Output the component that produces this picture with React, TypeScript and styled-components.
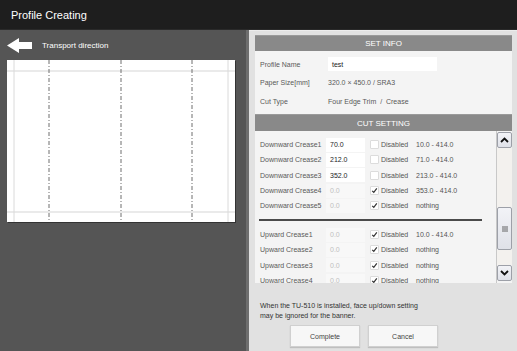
import styled, { createGlobalStyle } from "styled-components";

type CreaseRow = {
  label: string;
  value: string;
  disabled: boolean;
  range: string;
};

const downward: CreaseRow[] = [
  { label: "Downward Crease1", value: "70.0", disabled: false, range: "10.0 - 414.0" },
  { label: "Downward Crease2", value: "212.0", disabled: false, range: "71.0 - 414.0" },
  { label: "Downward Crease3", value: "352.0", disabled: false, range: "213.0 - 414.0" },
  { label: "Downward Crease4", value: "0.0", disabled: true, range: "353.0 - 414.0" },
  { label: "Downward Crease5", value: "0.0", disabled: true, range: "nothing" },
];

const upward: CreaseRow[] = [
  { label: "Upward Crease1", value: "0.0", disabled: true, range: "10.0 - 414.0" },
  { label: "Upward Crease2", value: "0.0", disabled: true, range: "nothing" },
  { label: "Upward Crease3", value: "0.0", disabled: true, range: "nothing" },
  { label: "Upward Crease4", value: "0.0", disabled: true, range: "nothing" },
];

const GlobalStyle = createGlobalStyle`
  body {
    margin: 0;
    background: #1e1e1e;
    font-family: "Liberation Sans", Arial, sans-serif;
  }
`;

function ArrowIcon() {
  return (
    <svg width="26" height="16" viewBox="0 0 26 16">
      <path d="M0 7.5 L12 0 L12 4 L25 4 L25 11 L12 11 L12 15 Z" fill="#fff" />
    </svg>
  );
}

function PaperPreview() {
  const creases = [42, 114, 185];
  return (
    <svg width="228" height="162" viewBox="0 0 228 162">
      <rect x="0" y="0" width="228" height="162" fill="#fff" />
      <line x1="0" y1="11" x2="228" y2="11" stroke="#d6d6d6" strokeWidth="1.2" />
      <line x1="0" y1="152" x2="228" y2="152" stroke="#d6d6d6" strokeWidth="1.2" />
      <line x1="7" y1="0" x2="7" y2="162" stroke="#dadada" strokeWidth="1" />
      <line x1="221" y1="0" x2="221" y2="162" stroke="#dadada" strokeWidth="1" />
      {creases.map((x) => (
        <line
          key={x}
          x1={x}
          y1="0"
          x2={x}
          y2="162"
          stroke="#6e6e6e"
          strokeWidth="1"
          strokeDasharray="4 2 1 2"
        />
      ))}
    </svg>
  );
}

function Check({ checked }: { checked: boolean }) {
  return (
    <CheckBox>
      {checked && (
        <svg width="7" height="7" viewBox="0 0 7 7">
          <path d="M1.2 3.8 L2.8 5.4 L5.8 1.4" fill="none" stroke="#333" strokeWidth="1.2" />
        </svg>
      )}
    </CheckBox>
  );
}

function Row({ row }: { row: CreaseRow }) {
  return (
    <CutRow>
      <Label>{row.label}</Label>
      <ValueBox $disabled={row.disabled}>{row.value}</ValueBox>
      <DisabledToggle>
        <Check checked={row.disabled} />
        <span>Disabled</span>
      </DisabledToggle>
      <Range>{row.range}</Range>
    </CutRow>
  );
}

function App() {
  return (
    <>
      <GlobalStyle />
      <Screen>
        <TitleBar>Profile Creating</TitleBar>
        <Main>
          <LeftPane>
            <Direction>
              <ArrowIcon />
              <span>Transport direction</span>
            </Direction>
            <Paper>
              <PaperPreview />
            </Paper>
          </LeftPane>
          <RightPane>
            <Card>
              <SectionHeader>SET INFO</SectionHeader>
              <InfoBody>
                <InfoRow>
                  <Label>Profile Name</Label>
                  <NameInput>test</NameInput>
                </InfoRow>
                <InfoRow>
                  <Label>Paper Size[mm]</Label>
                  <Value>320.0 × 450.0 / SRA3</Value>
                </InfoRow>
                <InfoRow>
                  <Label>Cut Type</Label>
                  <Value>Four Edge Trim&nbsp;&nbsp;/&nbsp;&nbsp;Crease</Value>
                </InfoRow>
              </InfoBody>
              <SectionHeader $tall>CUT SETTING</SectionHeader>
              <CutBody>
                <CutList>
                  {downward.map((row) => (
                    <Row key={row.label} row={row} />
                  ))}
                  <Separator />
                  {upward.map((row) => (
                    <Row key={row.label} row={row} />
                  ))}
                </CutList>
                <ScrollBar>
                  <ScrollButton>
                    <svg width="9" height="6" viewBox="0 0 9 6">
                      <path d="M1 5 L4.5 1.5 L8 5" fill="none" stroke="#111" strokeWidth="1.8" />
                    </svg>
                  </ScrollButton>
                  <Track $size={59} />
                  <Thumb>
                    <svg width="6" height="6" viewBox="0 0 6 6">
                      <path d="M0 1 H6 M0 3 H6 M0 5 H6" stroke="#555" strokeWidth="0.9" />
                    </svg>
                  </Thumb>
                  <Track $size={15} />
                  <ScrollButton>
                    <svg width="9" height="6" viewBox="0 0 9 6">
                      <path d="M1 1 L4.5 4.5 L8 1" fill="none" stroke="#111" strokeWidth="1.8" />
                    </svg>
                  </ScrollButton>
                </ScrollBar>
              </CutBody>
            </Card>
            <Footer>
              <Note>
                When the TU-510 is installed, face up/down setting
                <br />
                may be ignored for the banner.
              </Note>
              <Buttons>
                <Button>Complete</Button>
                <Button>Cancel</Button>
              </Buttons>
            </Footer>
          </RightPane>
        </Main>
      </Screen>
    </>
  );
}

const Screen = styled.div`
  width: 517px;
  height: 351px;
  display: flex;
  flex-direction: column;
  overflow: hidden;
`;

const TitleBar = styled.div`
  height: 30px;
  flex: none;
  display: flex;
  align-items: center;
  padding-left: 11px;
  background: #1e1e1e;
  color: #fff;
  font-size: 11px;
  border-bottom: 1px solid #2a2a2a;
  box-sizing: border-box;
`;

const Main = styled.div`
  flex: 1;
  display: flex;
  min-height: 0;
`;

const LeftPane = styled.div`
  width: 249px;
  flex: none;
  background: #555;
  border-right: 3px solid #6e6e6e;
  padding: 8px 0 0 7px;
  box-sizing: border-box;
`;

const Direction = styled.div`
  display: flex;
  align-items: center;
  gap: 9px;
  height: 15px;
  margin-bottom: 7px;
  color: #fff;
  font-size: 8px;

  svg {
    display: block;
  }
`;

const Paper = styled.div`
  width: 228px;
  height: 162px;
  box-shadow: 1px 1px 0 #333;

  svg {
    display: block;
  }
`;

const RightPane = styled.div`
  flex: 1;
  display: flex;
  flex-direction: column;
  background: #e1e1e1;
  border-top: 1px solid #ececec;
  padding: 4px 5px 0 6px;
`;

const Card = styled.div`
  height: 248px;
  flex: none;
  display: flex;
  flex-direction: column;
  background: #f4f4f4;
  overflow: hidden;
`;

const SectionHeader = styled.div<{ $tall?: boolean }>`
  height: ${(p) => (p.$tall ? 17 : 16)}px;
  flex: none;
  display: flex;
  align-items: center;
  justify-content: center;
  background: #898989;
  border-top: 1px solid #9a9a9a;
  box-sizing: border-box;
  color: #fff;
  font-size: 8px;
`;

const InfoBody = styled.div`
  height: 63px;
  flex: none;
  display: flex;
  flex-direction: column;
  gap: 4.5px;
  padding: 6px 0 0 5px;
  box-sizing: border-box;
`;

const InfoRow = styled.div`
  height: 14px;
  display: grid;
  grid-template-columns: 68px auto;
  align-items: center;
`;

const Label = styled.span`
  font-size: 7px;
  color: #595959;
  white-space: nowrap;
`;

const Value = styled.span`
  font-size: 7px;
  color: #595959;
  white-space: nowrap;
`;

const NameInput = styled.div`
  width: 109px;
  height: 14px;
  display: flex;
  align-items: center;
  padding-left: 4px;
  box-sizing: border-box;
  background: #fff;
  font-size: 7px;
  color: #222;
`;

const CutBody = styled.div`
  flex: 1;
  display: flex;
  min-height: 0;
`;

const CutList = styled.div`
  flex: 1;
  padding: 6px 0 0 5px;
  overflow: hidden;
`;

const CutRow = styled.div`
  height: 15.3px;
  display: grid;
  grid-template-columns: 66px 39px 51px auto;
  align-items: center;
`;

const ValueBox = styled.div<{ $disabled: boolean }>`
  height: 14px;
  display: flex;
  align-items: center;
  padding-left: 4px;
  box-sizing: border-box;
  width: 39px;
  background: ${(p) => (p.$disabled ? "#f8f8f8" : "#fff")};
  color: ${(p) => (p.$disabled ? "#c0c0c0" : "#1e1e1e")};
  font-size: 7px;
`;

const DisabledToggle = styled.div`
  display: flex;
  align-items: center;
  gap: 2px;
  padding-left: 5px;
  font-size: 7px;
  color: #555;
  white-space: nowrap;
`;

const CheckBox = styled.span`
  width: 9px;
  height: 9px;
  flex: none;
  display: flex;
  align-items: center;
  justify-content: center;
  background: #fff;
  border: 1px solid #dcdcdc;
  border-radius: 1px;
  box-sizing: border-box;

  svg {
    display: block;
  }
`;

const Range = styled.span`
  font-size: 7px;
  color: #555;
  white-space: nowrap;
`;

const Separator = styled.div`
  width: 223px;
  height: 2px;
  margin: 6px 0 5.5px -1px;
  background: #4a4a4a;
`;

const ScrollBar = styled.div`
  width: 16px;
  flex: none;
  display: flex;
  flex-direction: column;
  border-left: 1px solid #c8c8c8;
  box-sizing: border-box;
  padding-top: 1px;
`;

const ScrollButton = styled.div`
  height: 16px;
  flex: none;
  display: flex;
  align-items: center;
  justify-content: center;
  background: linear-gradient(#f2f3f7, #dfe1e8);
  border: 1px solid #9da0a8;
  border-radius: 2px;
  box-sizing: border-box;
`;

const Track = styled.div<{ $size: number }>`
  height: ${(p) => p.$size}px;
  flex: none;
  background: #f3f1ee;
`;

const Thumb = styled(ScrollButton)`
  height: 43px;
`;

const Footer = styled.div`
  flex: 1;
  display: flex;
  flex-direction: column;
  padding: 18px 0 0 5px;
`;

const Note = styled.div`
  font-size: 7px;
  line-height: 9.5px;
  color: #333;
`;

const Buttons = styled.div`
  display: flex;
  gap: 8px;
  margin: 5px 0 0 30px;
`;

const Button = styled.div`
  width: 70px;
  height: 22px;
  display: flex;
  align-items: center;
  justify-content: center;
  background: #f7f7f7;
  border: 1px solid #d0d0d0;
  box-sizing: border-box;
  box-shadow: 0 1px 1px rgba(0, 0, 0, 0.15);
  font-size: 7px;
  color: #444;
`;

export default App;
